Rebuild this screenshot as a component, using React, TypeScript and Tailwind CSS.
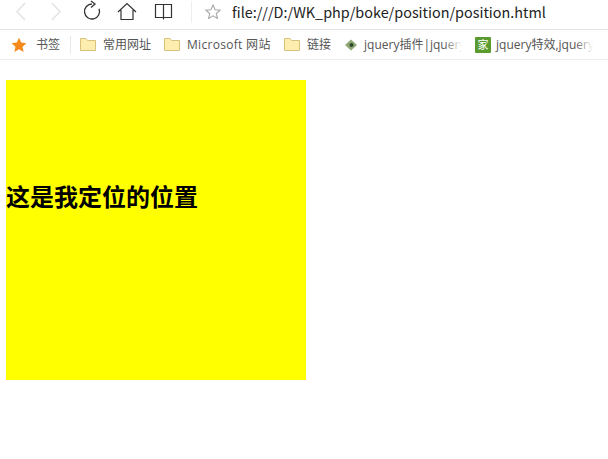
import React from 'react';

const cjk = 'font-["Noto_Sans_CJK_SC","Liberation_Sans",sans-serif]';
const label = 'font-["Open_Sans","Noto_Sans_CJK_SC",sans-serif] pt-[1px] text-[12px] leading-[20px] text-[#555]';

function Folder() {
  return (
    <svg width="16" height="14" viewBox="0 0 16 14" className="shrink-0">
      <path d="M.5 12.500V.5h5.500l1.500 2h8v10z" fill="#fdeeb0" stroke="#d8c27c" strokeWidth="1" />
    </svg>
  );
}

function Bookmark({ icon, text, gap, className }: { icon: React.ReactNode; text: string; gap: string; className: string }) {
  return (
    <div className={`flex h-[22px] items-center whitespace-nowrap ${className}`}>
      {icon}
      <span className={`${label} ${gap}`}>{text}</span>
    </div>
  );
}

// the bar cuts long titles off and fades them out
function FadedBookmark({ icon, text, gap, className }: { icon: React.ReactNode; text: string; gap: string; className: string }) {
  return (
    <div className={`relative flex h-[22px] items-center overflow-hidden whitespace-nowrap ${className}`}>
      {icon}
      <span className={`${label} ${gap}`}>{text}</span>
      <div className="absolute inset-y-0 right-0 w-[18px] bg-gradient-to-r from-transparent to-white" />
    </div>
  );
}

export default function App() {
  return (
    <div className={`h-[459px] w-[608px] overflow-hidden bg-white ${cjk}`}>
      {/* Toolbar */}
      <div className="flex h-[30px] items-start border-b border-[#e4e4e4]">
        <svg width="190" height="24" viewBox="0 0 190 24" fill="none" className="shrink-0">
          <path d="M25 3l-8 8.500 8 8.500" stroke="#e2e2e2" strokeWidth="1.400" />
          <path d="M52 3l8 8.500-8 8.500" stroke="#e2e2e2" strokeWidth="1.400" />
          <path d="M92 4a7.500 7.500 0 1 0 7 4.800" stroke="#333" strokeWidth="1.300" />
          <path d="M91 1l4 3-4 3.500" stroke="#333" strokeWidth="1.300" />
          <path d="M118 12l9-8.500 9 8.500M121 10V19.500h12V10" stroke="#333" strokeWidth="1.200" />
          <path d="M155.500 4.500h16v13h-16zM163.500 4.500v15" stroke="#333" strokeWidth="1.200" />
        </svg>
        <div className="ml-[1px] mt-[1px] h-[22px] w-px bg-[#eeeeee]" />
        <svg width="18" height="18" viewBox="0 0 18 18" fill="none" className="ml-[12px] mt-[3px] shrink-0">
          <path d="M9 2l2.100 4.700 5 .5-3.800 3.300 1.100 5L9 12.900l-4.400 2.600 1.100-5L1.900 7.200l5-.5z" stroke="#a8a8a8" strokeWidth="1.100" />
        </svg>
        <span className="ml-[10px] text-[14.400px] leading-[24px] text-[#222]">file:///D:/WK_php/boke/position/position.html</span>
      </div>

      {/* Bookmarks bar */}
      <div className="flex h-[30px] items-center border-b border-[#ececec] bg-white">
        <svg width="16" height="16" viewBox="0 0 16 16" className="ml-[11px] shrink-0">
          <path d="M8 .800l2.200 4.800 5.200.6-3.900 3.500 1.100 5.200L8 12.300l-4.600 2.600 1.100-5.200L.600 6.200l5.200-.6z" fill="#f5891a" />
        </svg>
        <span className={`ml-[9px] ${label}`}>书签</span>
        <div className="ml-[10px] h-[18px] w-px bg-[#e8e8e8]" />
        <Bookmark className="ml-[9px] w-[84px]" gap="ml-[7px]" icon={<Folder />} text="常用网址" />
        <Bookmark className="w-[120px]" gap="ml-[7px] tracking-[0.3px]" icon={<Folder />} text="Microsoft 网站" />
        <Bookmark className="w-[60px]" gap="ml-[7px]" icon={<Folder />} text="链接" />
        <FadedBookmark
          className="w-[118px]"
          gap="ml-[6px]"
          icon={
            <svg width="14" height="14" viewBox="0 0 14 14" className="shrink-0">
              <path d="M7 1.500L13 7l-6 5.500L1 7z" fill="#8fa874" />
              <circle cx="7.500" cy="7" r="2" fill="#2f4a2c" />
            </svg>
          }
          text="jquery插件|jquery"
        />
        <FadedBookmark
          className="ml-[13px] w-[118px]"
          gap="ml-[5px]"
          icon={<span className="flex size-[16px] shrink-0 items-center justify-center rounded-[1px] bg-[#5a9a2f] text-[11px] leading-none text-white">家</span>}
          text="jquery特效,jquery"
        />
      </div>

      {/* Page */}
      <div className="ml-[6px] mt-[20px] size-[300px] bg-[#ffff00] pt-[104px]">
        <h2 className="text-[24px] font-bold leading-[24px] text-black">这是我定位的位置</h2>
      </div>
    </div>
  );
}
